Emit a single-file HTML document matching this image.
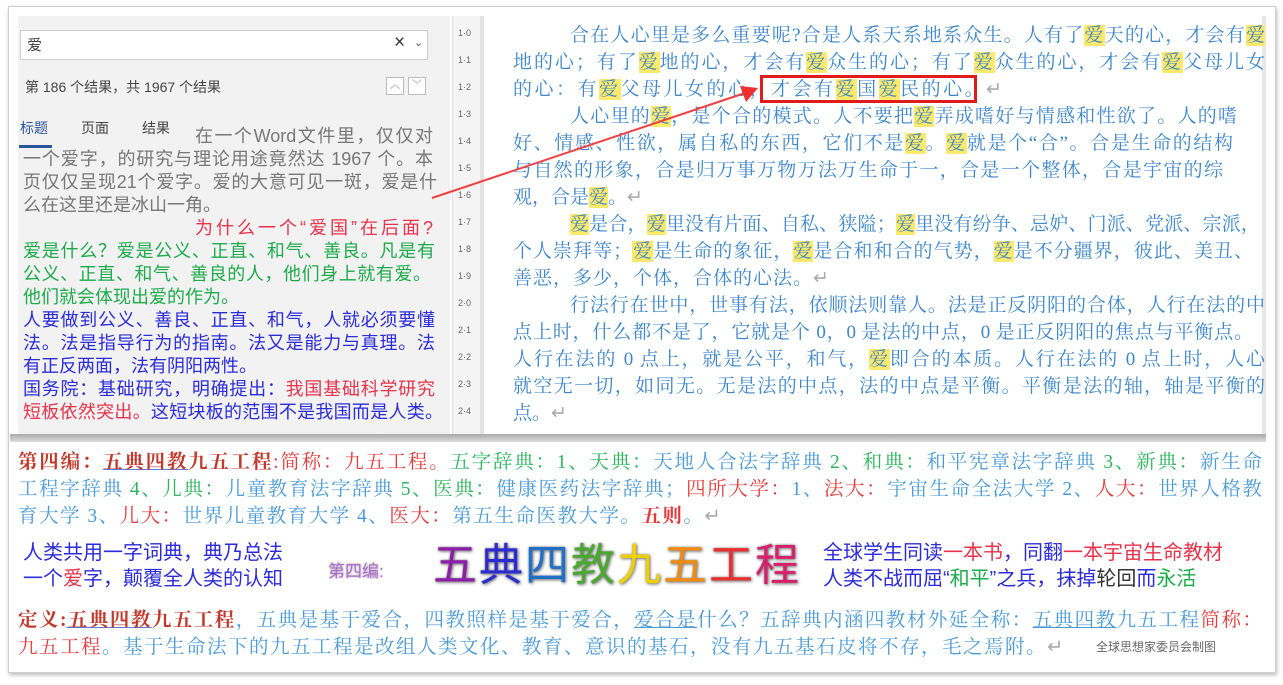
<!DOCTYPE html>
<html><head><meta charset="utf-8"><style>
*{margin:0;padding:0;box-sizing:border-box}
body{width:1283px;height:685px;background:#fff;position:relative;overflow:hidden;font-family:"Liberation Serif","Noto Serif CJK SC",serif}
.a{position:absolute;white-space:nowrap}
.j{position:absolute;white-space:nowrap;text-align:justify;text-align-last:justify;overflow:hidden}
.s{font-family:"Liberation Sans","Noto Sans CJK SC",sans-serif}
.h{background:#fde96b}
.dc{color:#3d86c8;font-size:19px;line-height:27px}
.lp{font-size:18px;line-height:23px}
.bt{font-size:19.5px;line-height:27px;color:#4a9ad6}
.r{color:#e23a3a}.g{color:#2bb45a}.bl{color:#4a9ad6}
</style></head><body>
<div class="a" style="left:8px;top:6px;width:1268px;height:667px;border:1px solid #d0d0d0;box-shadow:1px 2px 4px #bbb"></div>
<div class="a" style="left:18px;top:16px;width:432px;height:420px;background:#f2f2f2"></div>
<div class="a" style="left:20px;top:30px;width:408px;height:30px;background:#fff;border:1px solid #ccc"></div>
<div class="a s" style="left:27px;top:34px;font-size:15px;color:#444">爱</div>
<div class="a s" style="left:394px;top:32px;font-size:19px;color:#333">×</div>
<div class="a s" style="left:414px;top:36px;font-size:11px;color:#555">⌄</div>
<div class="a s" style="left:25px;top:77px;font-size:14px;color:#444">第 186 个结果，共 1967 个结果</div>
<div class="a" style="left:386px;top:77px;width:18px;height:18px;border:1px solid #bbb;background:#fff;font-size:10px;text-align:center;line-height:16px;color:#666">︿</div>
<div class="a" style="left:408px;top:77px;width:18px;height:18px;border:1px solid #bbb;background:#fff;font-size:10px;text-align:center;line-height:16px;color:#666">﹀</div>
<div class="a s" style="left:20px;top:118px;font-size:14px;color:#2b579a">标题</div>
<div class="a" style="left:19px;top:145px;width:33px;height:3px;background:#2b579a"></div>
<div class="a s" style="left:81px;top:118px;font-size:14px;color:#444">页面</div>
<div class="a s" style="left:142px;top:118px;font-size:14px;color:#444">结果</div>
<div class="lp s" style="position:absolute;left:23px;top:125px;width:415px;color:#777">
<div class="j" style="left:172px;top:0;width:238px">在一个Word文件里，仅仅对</div>
<div class="j" style="left:0;top:23px;width:410px">一个爱字，的研究与理论用途竟然达 1967 个。本</div>
<div class="j" style="left:0;top:46px;width:414px">页仅仅呈现21个爱字。爱的大意可见一斑，爱是什</div>
<div class="a" style="left:0;top:69px">么在这里还是冰山一角。</div>
<div class="j" style="left:172px;top:92px;width:238px;color:#e5334b">为什么一个“爱国”在后面?</div>
<div class="j" style="left:0;top:115px;width:412px;color:#1daa4a">爱是什么？爱是公义、正直、和气、善良。凡是有</div>
<div class="j" style="left:0;top:138px;width:408px;color:#1daa4a">公义、正直、和气、善良的人，他们身上就有爱。</div>
<div class="a" style="left:0;top:161px;color:#1daa4a">他们就会体现出爱的作为。</div>
<div class="j" style="left:0;top:184px;width:412px;color:#2b2bd8">人要做到公义、善良、正直、和气，人就必须要懂</div>
<div class="j" style="left:0;top:207px;width:412px;color:#2b2bd8">法。法是指导行为的指南。法又是能力与真理。法</div>
<div class="a" style="left:0;top:230px;color:#2b2bd8">有正反两面，法有阴阳两性。</div>
<div class="j" style="left:0;top:253px;width:412px;color:#2b2bd8">国务院：基础研究，明确提出：<span style="color:#e5334b">我国基础科学研究</span></div>
<div class="j" style="left:0;top:276px;width:420px;color:#2b2bd8"><span style="color:#e5334b">短板依然突出。</span>这短块板的范围不是我国而是人类。</div>
</div>
<div class="a" style="left:452px;top:16px;width:28px;height:420px;background:#f4f4f4;border-left:1px solid #ddd"></div>
<div class="a s" style="left:458px;top:20px;width:12px;font-size:9px;line-height:27px;color:#666;white-space:normal;text-align:center">1·0<br>1·1<br>1·2<br>1·3<br>1·4<br>1·5<br>1·6<br>1·7<br>1·8<br>1·9<br>2·0<br>2·1<br>2·2<br>2·3<br>2·4</div>
<div class="a" style="left:480px;top:16px;width:4px;height:420px;background:#e4e4e4"></div>
<div class="a" style="left:1262px;top:16px;width:4px;height:420px;background:#e8e8e8"></div>
<div class="dc" style="position:absolute;left:513px;top:22px;width:752px">
<div class="j" style="left:57px;top:0;width:695px">合在人心里是多么重要呢?合是人系天系地系众生。人有了<span class="h">爱</span>天的心，才会有<span class="h">爱</span></div>
<div class="j" style="left:0;top:27px;width:752px">地的心；有了<span class="h">爱</span>地的心，才会有<span class="h">爱</span>众生的心；有了<span class="h">爱</span>众生的心，才会有<span class="h">爱</span>父母儿女</div>
<div class="a" style="left:0;top:54px;letter-spacing:2.5px">的心：有<span class="h">爱</span>父母儿女的心，才会有<span class="h">爱</span>国<span class="h">爱</span>民的心。<span style="color:#aaa">↵</span></div>
<div class="j" style="left:57px;top:81px;width:667px">人心里的<span class="h">爱</span>，是个合的模式。人不要把<span class="h">爱</span>弄成嗜好与情感和性欲了。人的嗜</div>
<div class="j" style="left:0;top:108px;width:720px">好、情感、性欲，属自私的东西，它们不是<span class="h">爱</span>。<span class="h">爱</span>就是个“合”。合是生命的结构</div>
<div class="j" style="left:0;top:135px;width:710px">与自然的形象，合是归万事万物万法万生命于一，合是一个整体，合是宇宙的综</div>
<div class="a" style="left:0;top:162px">观，合是<span class="h">爱</span>。<span style="color:#aaa">↵</span></div>
<div class="j" style="left:57px;top:189px;width:690px"><span class="h">爱</span>是合，<span class="h">爱</span>里没有片面、自私、狭隘；<span class="h">爱</span>里没有纷争、忌妒、门派、党派、宗派，</div>
<div class="j" style="left:0;top:216px;width:740px">个人崇拜等；<span class="h">爱</span>是生命的象征，<span class="h">爱</span>是合和和合的气势，<span class="h">爱</span>是不分疆界，彼此、美丑、</div>
<div class="a" style="left:0;top:243px;letter-spacing:1px">善恶，多少，个体，合体的心法。<span style="color:#aaa">↵</span></div>
<div class="j" style="left:57px;top:270px;width:695px">行法行在世中，世事有法，依顺法则靠人。法是正反阴阳的合体，人行在法的中</div>
<div class="j" style="left:0;top:297px;width:740px">点上时，什么都不是了，它就是个 0，0 是法的中点，0 是正反阴阳的焦点与平衡点。</div>
<div class="j" style="left:0;top:324px;width:752px">人行在法的 0 点上，就是公平，和气，<span class="h">爱</span>即合的本质。人行在法的 0 点上时，人心</div>
<div class="j" style="left:0;top:351px;width:752px">就空无一切，如同无。无是法的中点，法的中点是平衡。平衡是法的轴，轴是平衡的</div>
<div class="a" style="left:0;top:378px">点。<span style="color:#aaa">↵</span></div>
</div>
<div class="a" style="left:760px;top:75px;width:217px;height:28px;border:3px solid #e01b1b"></div>
<svg class="a" style="left:430px;top:80px" width="340" height="130"><line x1="2" y1="118" x2="318" y2="12" stroke="#f04040" stroke-width="2"/><polygon points="328,8 310,6 316,22" fill="#f03030"/></svg>
<div class="a" style="left:10px;top:434px;width:1256px;height:8px;background:linear-gradient(#aaa,#ddd)"></div>
<div class="bt" style="position:absolute;left:18px;top:449px;width:1244px">
<div class="j" style="left:0;top:0;width:1244px"><b style="color:#c0392b">第四编：</b><b style="color:#c0392b;text-decoration:underline;text-decoration-color:#5b7fd8">五典四教</b><b style="color:#c0392b">九五工程</b><span class="r">:简称：九五工程。</span><span class="g">五字辞典：1、天典：</span>天地人合法字辞典 <span class="g">2、和典：</span>和平宪章法字辞典 <span class="g">3、新典：</span>新生命</div>
<div class="j" style="left:0;top:27px;width:1244px">工程字辞典 <span class="g">4、儿典：</span>儿童教育法字辞典 <span class="g">5、医典：</span>健康医药法字辞典；<span class="r">四所大学：</span>1、<span class="r">法大：</span>宇宙生命全法大学 2、<span class="r">人大：</span>世界人格教</div>
<div class="a" style="left:0;top:54px;letter-spacing:1.5px">育大学 3、<span class="r">儿大：</span>世界儿童教育大学 4、<span class="r">医大：</span>第五生命医教大学。<b class="r">五则</b>。<span style="color:#aaa">↵</span></div>
<div class="a s" style="left:5px;top:91px;font-size:20px;line-height:26px;color:#2b2bd8">人类共用一字词典，典乃总法<br>一个<span style="color:#e5334b">爱</span>字，颠覆全人类的认知</div>
<div class="a s" style="left:310px;top:109px;font-size:17px;color:#b06cd0;text-shadow:0 0 2px #999">第四编:</div>
<div class="a s" style="left:415px;top:90px;font-size:44px;line-height:54px;letter-spacing:2px;text-shadow:1px 1px 3px #777,0 0 2px #999"><span style="color:#8b1fa8">五</span><span style="color:#2b2bd0">典</span><span style="color:#2070c8">四</span><span style="color:#4aa830">教</span><span style="color:#f0d000">九</span><span style="color:#f08a10">五</span><span style="color:#e83030">工</span><span style="color:#d8206a">程</span></div>
<div class="a s" style="left:805px;top:91px;font-size:20px;line-height:26px;color:#2b2bd8">全球学生同读<span style="color:#e5334b">一本书</span>，同翻<span style="color:#e5334b">一本宇宙生命教材</span><br>人类不战而屈“<span style="color:#1daa4a">和平</span>”之兵，抹掉<span style="color:#333">轮回</span>而<span style="color:#1daa4a">永活</span></div>
<div class="j" style="left:0;top:158px;width:1244px"><b style="color:#c0392b">定义:</b><b style="color:#c0392b;text-decoration:underline;text-decoration-color:#5b7fd8">五典四教</b><b style="color:#c0392b">九五工程</b>，五典是基于爱合，四教照样是基于爱合，<u>爱合是</u>什么？五辞典内涵四教材外延全称：<u>五典四教</u>九五工程<span class="r">简称：</span></div>
<div class="a" style="left:0;top:185px;letter-spacing:1.5px"><span class="r">九五工程</span>。基于生命法下的九五工程是改组人类文化、教育、意识的基石，没有九五基石皮将不存，毛之焉附。<span style="color:#aaa">↵</span></div>
<div class="a s" style="left:1078px;top:190px;font-size:12px;line-height:16px;color:#666">全球思想家委员会制图</div>
</div>
</body></html>
